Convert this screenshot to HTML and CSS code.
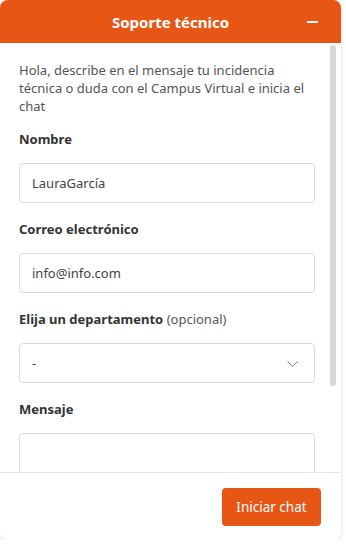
FILE: index.html
```html
<!DOCTYPE html>
<html lang="es">
<head>
  <meta charset="UTF-8">
  <title>Soporte técnico</title>
  <meta name="viewport" content="width=device-width, initial-scale=1.0">
  <link rel="stylesheet" href="styles.css">
</head>
<body>
  <div class="chat">
    <div class="chat-header">
      <span></span>
      <h1>Soporte técnico</h1>
      <button class="minimize" aria-label="Minimizar"><span></span></button>
    </div>

    <div class="chat-main">
      <div class="chat-body">
        <p class="intro">Hola, describe en el mensaje tu incidencia técnica o duda con el Campus Virtual e inicia el chat</p>

        <div class="field">
          <label for="nombre">Nombre</label>
          <input id="nombre" type="text" value="LauraGarcía" />
        </div>

        <div class="field">
          <label for="correo">Correo electrónico</label>
          <input id="correo" type="email" value="info@info.com" />
        </div>

        <div class="field">
          <label for="depto">Elija un departamento <span class="opt">(opcional)</span></label>
          <div class="select-wrap">
            <select id="depto">
              <option>-</option>
            </select>
            <svg class="chevron" width="11" height="6" viewBox="0 0 11 6"><path d="M0.5 0.5 L5.5 5.3 L10.5 0.5" fill="none" stroke="#7a7a7a" stroke-width="1"/></svg>
          </div>
        </div>

        <div class="field">
          <label for="mensaje">Mensaje</label>
          <textarea id="mensaje"></textarea>
        </div>
      </div>
      <div class="scrollbar"><div class="thumb"></div></div>
    </div>

    <div class="chat-footer">
      <button class="start">Iniciar chat</button>
    </div>
  </div>
</body>
</html>
```

FILE: styles.css
```css
body { margin: 0; font-family: "Noto Sans", sans-serif; background: #fff; }
.chat { width: 341px; height: 540px; display: flex; flex-direction: column; border-radius: 8px; overflow: hidden; box-shadow: 0 0 5px rgba(0,0,0,0.14); background: #fff; }
.chat-header { height: 43px; flex: none; background: #e85616; color: #fff; display: grid; grid-template-columns: 1fr auto 1fr; align-items: center; }
.chat-header h1 { margin: 0; font-size: 15px; font-weight: 700; }
.minimize { justify-self: end; margin-right: 22px; width: 13px; height: 13px; padding: 0; border: none; background: none; display: flex; align-items: center; justify-content: center; cursor: pointer; }
.minimize span { display: block; width: 11px; height: 2px; background: #fff; }

.chat-main { flex: 1; min-height: 0; display: flex; }
.chat-body { flex: 1; min-width: 0; overflow: hidden; padding: 18px 15px 30px 19px; }
.scrollbar { flex: none; width: 11px; padding-top: 2px; }
.thumb { width: 6px; height: 341px; background: #d5d8dc; border-radius: 3px; }

.intro { margin: 0 0 15px; font-size: 13px; line-height: 18px; color: #555; }
.field { margin-bottom: 17px; }
.field label { display: block; margin-bottom: 15px; font-size: 13px; line-height: 18px; font-weight: 700; color: #333; }
.field label .opt { font-weight: 400; color: #555; }
.field input, .field select, .field textarea { box-sizing: border-box; width: 100%; height: 40px; border: 1px solid #dadada; border-radius: 4px; padding: 0 12px; font-family: inherit; font-size: 13px; color: #444; background: #fff; outline: none; }
.select-wrap { position: relative; }
.field select { appearance: none; -webkit-appearance: none; }
.chevron { position: absolute; right: 17px; top: 18px; pointer-events: none; }
.field textarea { height: 110px; resize: none; padding: 10px 12px; }

.chat-footer { flex: none; border-top: 1px solid #e6e6e6; padding: 15px 20px 14px; display: flex; justify-content: flex-end; }
.start { width: 99px; height: 38px; border: none; border-radius: 4px; background: #e85616; color: #fff; font-family: inherit; font-size: 13.5px; cursor: pointer; }
```
